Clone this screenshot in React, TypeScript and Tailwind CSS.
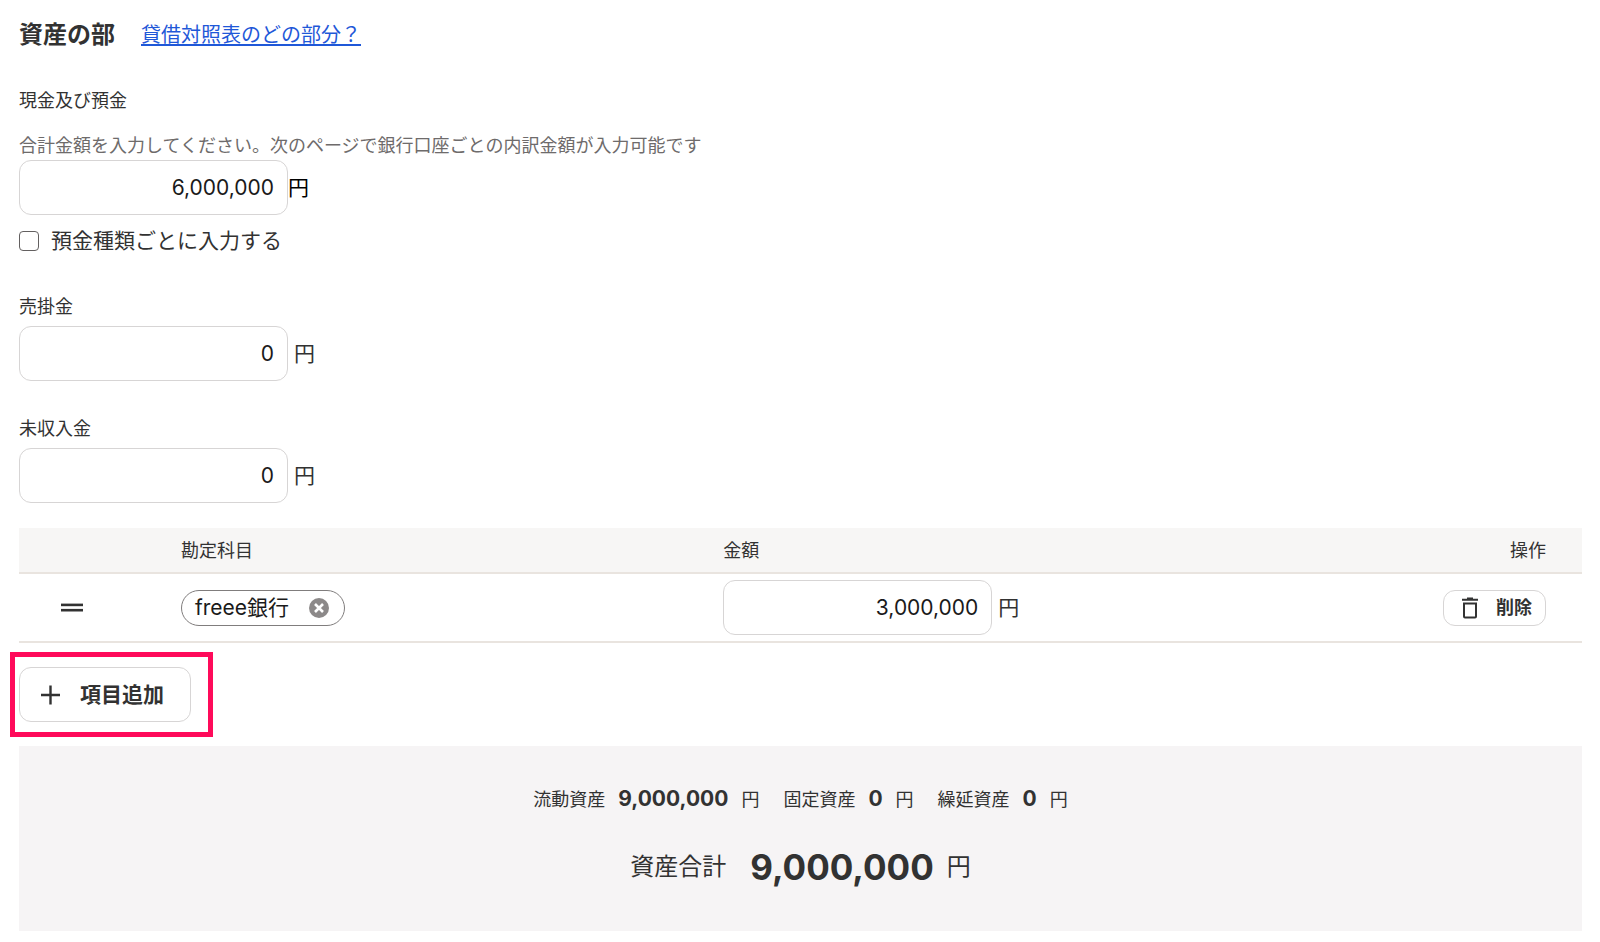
import { useState } from "react";

const amountInput =
  "h-[55px] w-[269px] rounded-xl border border-[#d7d5d5] bg-white pr-[13px] text-right text-[21px] text-[#1a1a1a] outline-none focus:border-[#2864f0]";

function AmountField({ id, label }: { id: string; label: string }) {
  return (
    <div>
      <label htmlFor={id} className="block text-[18px] leading-7">
        {label}
      </label>
      <div className="mt-[5px] flex items-center gap-1.5 text-[21px]">
        <input id={id} type="text" inputMode="numeric" defaultValue="0" className={amountInput} />
        <span>円</span>
      </div>
    </div>
  );
}

function SummaryItem({ label, value }: { label: string; value: string }) {
  return (
    <div className="flex items-center gap-[13px]">
      <dt>{label}</dt>
      <dd className="flex items-center gap-[13px]">
        <strong className="text-[21px] font-bold">{value}</strong>
        <span>円</span>
      </dd>
    </div>
  );
}

export default function App() {
  const [byType, setByType] = useState(false);

  return (
    <main
      lang="ja"
      className="bg-white pt-[17px] pr-[18px] pb-3 pl-[19px] font-['Inter','Noto_Sans_CJK_JP',sans-serif] text-[#323232]"
    >
      <header className="flex h-9 items-center gap-[26px]">
        <h1 className="text-[24px] font-bold">資産の部</h1>
        <a href="#balance-sheet" className="text-[20px] text-[#1f58d8] underline underline-offset-2">
          貸借対照表のどの部分？
        </a>
      </header>

      <section className="mt-[34px]">
        <label htmlFor="cash" className="block text-[18px] leading-7">
          現金及び預金
        </label>
        <p id="cash-help" className="mt-[17px] text-[18px] leading-7 text-[#6e6b6b]">
          合計金額を入力してください。次のページで銀行口座ごとの内訳金額が入力可能です
        </p>
        <div className="flex items-center text-[21px] text-black">
          <input
            id="cash"
            type="text"
            inputMode="numeric"
            aria-describedby="cash-help"
            defaultValue="6,000,000"
            className={amountInput}
          />
          <span>円</span>
        </div>
        <label className="mt-3 flex h-7 items-center gap-3 text-[21px]">
          <input
            type="checkbox"
            checked={byType}
            onChange={(e) => setByType(e.target.checked)}
            className="size-5 appearance-none rounded border border-[#636060] bg-white checked:bg-[#2864f0]"
          />
          <span>預金種類ごとに入力する</span>
        </label>
      </section>

      <section className="mt-[38px] flex flex-col gap-[34px]">
        <AmountField id="receivable" label="売掛金" />
        <AmountField id="accrued" label="未収入金" />
      </section>

      <table className="mt-[25px] w-full table-fixed border-collapse text-left">
        <colgroup>
          <col className="w-[126px]" />
          <col className="w-[34.7%]" />
          <col />
          <col className="w-[180px]" />
        </colgroup>
        <thead>
          <tr className="h-[45px] border-b-2 border-[#e9e4df] bg-[#f7f6f5] text-[18px]">
            <td />
            <th scope="col" className="pl-9 font-normal">勘定科目</th>
            <th scope="col" className="pl-9 font-normal">金額</th>
            <th scope="col" className="pr-9 text-right font-normal">操作</th>
          </tr>
        </thead>
        <tbody>
          <tr className="h-[69px] border-b-2 border-[#e9e4df] text-[21px]">
            <td className="pl-[42px]">
              <button type="button" aria-label="並び替え" className="block">
                <svg width="22" height="10" viewBox="0 0 22 10" fill="#323232">
                  <rect y="0.600" width="22" height="2.600" />
                  <rect y="5.900" width="22" height="2.600" />
                </svg>
              </button>
            </td>
            <td className="pl-9">
              <span className="inline-flex h-9 items-center gap-5 rounded-full border border-[#807d7d] pr-[15px] pl-[13px] align-middle text-[#1a1a1a]">
                <span>freee銀行</span>
                <button type="button" aria-label="freee銀行を外す">
                  <svg width="20" height="20" viewBox="0 0 20 20">
                    <circle cx="10" cy="10" r="10" fill="#8c8989" />
                    <path d="M6 6l8 8M14 6l-8 8" stroke="#fff" strokeWidth="2.6" />
                  </svg>
                </button>
              </span>
            </td>
            <td className="pl-9">
              <div className="flex items-center gap-1.5">
                <input
                  type="text"
                  inputMode="numeric"
                  aria-label="金額"
                  defaultValue="3,000,000"
                  className={amountInput}
                />
                <span>円</span>
              </div>
            </td>
            <td className="pr-9">
              <button
                type="button"
                className="ml-auto flex h-9 items-center gap-4 rounded-xl border border-[#d7d5d5] bg-white pr-[13px] pl-4 text-[18px] font-bold"
              >
                <svg width="20" height="22" viewBox="0 0 20 22" fill="#323232">
                  <path d="M7 0.500h6v1.200h5v2H2v-2h5z" />
                  <path d="M3 5.500h14v14a2 2 0 0 1-2 2H5a2 2 0 0 1-2-2zM5 7.500v12h10v-12z" fillRule="evenodd" />
                </svg>
                <span>削除</span>
              </button>
            </td>
          </tr>
        </tbody>
      </table>

      <div className="relative mt-6 w-fit">
        <button
          type="button"
          className="flex h-[55px] items-center gap-5 rounded-xl border border-[#d7d5d5] bg-white pr-[26px] pl-[21px] text-[21px] font-bold"
        >
          <svg width="19" height="20" viewBox="0 0 19 20" fill="none" stroke="#323232" strokeWidth="2.4">
            <path d="M9.500 0.500v19M0 10h19" />
          </svg>
          <span>項目追加</span>
        </button>
        <div className="pointer-events-none absolute -top-[15px] -right-[22px] -bottom-[15px] -left-[9px] border-[5px] border-[#ff0a5a]" />
      </div>

      <section className="mt-6 bg-[#f6f4f5] pt-[39px] pb-[46px]">
        <dl className="flex h-7 items-center justify-center gap-6 text-[18px]">
          <SummaryItem label="流動資産" value="9,000,000" />
          <SummaryItem label="固定資産" value="0" />
          <SummaryItem label="繰延資産" value="0" />
        </dl>
        <dl className="mt-9 flex h-9 items-center justify-center gap-6 text-[24px]">
          <dt>資産合計</dt>
          <dd className="flex items-center gap-[13px]">
            <strong className="text-[35px] font-bold">9,000,000</strong>
            <span>円</span>
          </dd>
        </dl>
      </section>
    </main>
  );
}
